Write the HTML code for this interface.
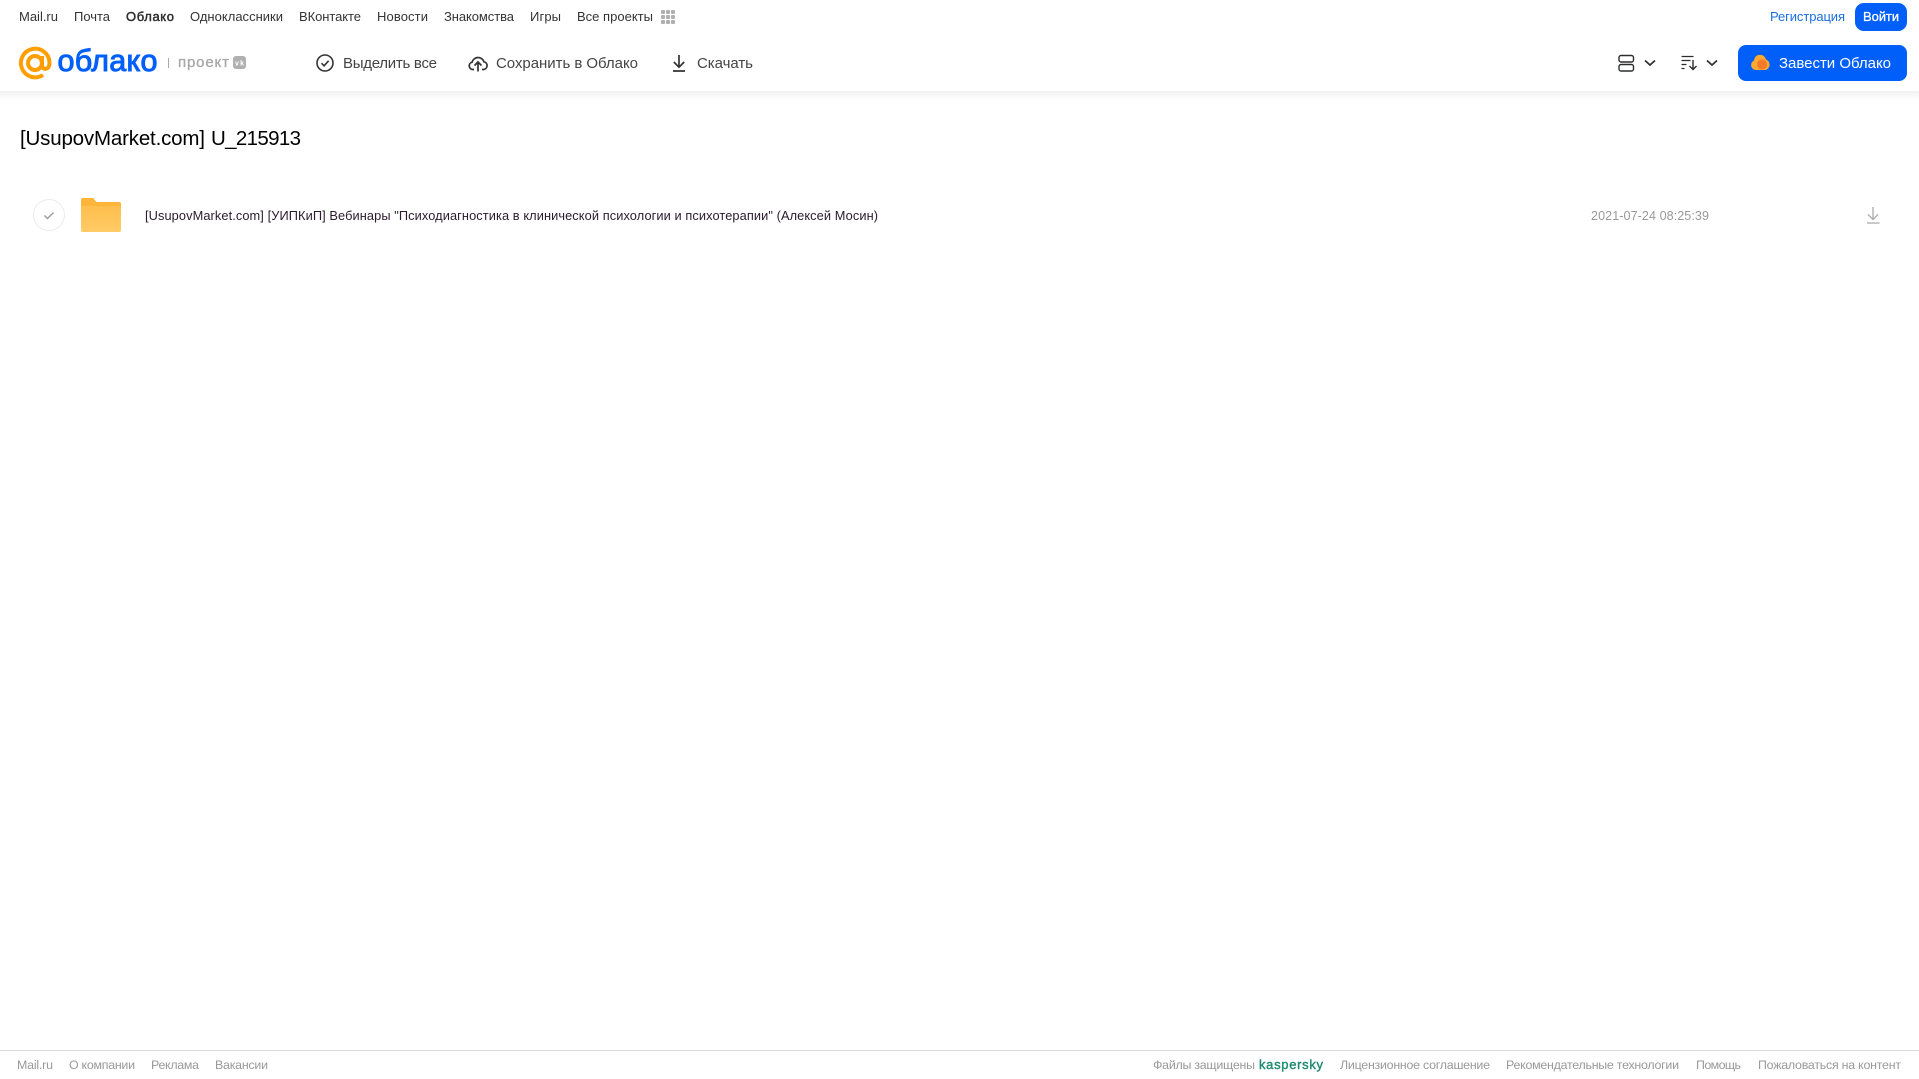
<!DOCTYPE html>
<html lang="ru">
<head>
<meta charset="utf-8">
<title>[UsupovMarket.com] U_215913</title>
<style>
html,body{margin:0;padding:0;width:1919px;height:1079px;overflow:hidden;background:#fff}
svg{display:block;position:absolute;left:0;top:0}
text{font-family:"Liberation Sans",sans-serif;white-space:pre}
.n{font-size:13px;fill:#333}
.t{font-size:15px;fill:#444}
.f{font-size:12.400px;fill:#999}
</style>
</head>
<body>
<svg width="1919" height="1079" viewBox="0 0 1919 1079" xmlns="http://www.w3.org/2000/svg">
<defs>
<linearGradient id="sh" x1="0" y1="0" x2="0" y2="1"><stop offset="0" stop-color="#f1f1f1"/><stop offset="1" stop-color="#fff"/></linearGradient>
<linearGradient id="fb" x1="0" y1="0" x2="0" y2="1"><stop offset="0" stop-color="#ffbf4d"/><stop offset="1" stop-color="#ffcb66"/></linearGradient>
</defs>
<rect x="0" y="91" width="1919" height="9" fill="url(#sh)"/>

<!-- top nav -->
<text class="n" x="19" y="21" textLength="39">Mail.ru</text>
<text class="n" x="74" y="21" textLength="36">Почта</text>
<text class="n" x="126" y="21" textLength="48" style="fill:#2c2d2e;stroke:#2c2d2e;stroke-width:.45px">Облако</text>
<text class="n" x="190" y="21" textLength="93">Одноклассники</text>
<text class="n" x="299" y="21" textLength="62">ВКонтакте</text>
<text class="n" x="377" y="21" textLength="51">Новости</text>
<text class="n" x="444" y="21" textLength="70">Знакомства</text>
<text class="n" x="530" y="21" textLength="31">Игры</text>
<text class="n" x="577" y="21" textLength="76">Все проекты</text>
<g fill="#b0b0b0">
<rect x="661" y="10" width="4" height="4" rx="1"/><rect x="666" y="10" width="4" height="4" rx="1"/><rect x="671" y="10" width="4" height="4" rx="1"/>
<rect x="661" y="15" width="4" height="4" rx="1"/><rect x="666" y="15" width="4" height="4" rx="1"/><rect x="671" y="15" width="4" height="4" rx="1"/>
<rect x="661" y="20" width="4" height="4" rx="1"/><rect x="666" y="20" width="4" height="4" rx="1"/><rect x="671" y="20" width="4" height="4" rx="1"/>
</g>
<text x="1770" y="21" textLength="75" style="font-size:13px;fill:#1a6fe0">Регистрация</text>
<rect x="1855" y="3" width="52" height="28" rx="9" fill="#005ff9"/>
<text x="1863" y="21" textLength="36" style="font-size:13px;fill:#fff;stroke:#fff;stroke-width:.3px">Войти</text>

<!-- logo -->
<g fill="none" stroke="#ff9e00" stroke-width="4">
<circle cx="35" cy="63" r="7"/>
<path d="M42 56v9c0 5.500 7.500 5.500 7.500-2A14.300 14.300 0 1 0 43 75"/>
</g>
<text x="57.500" y="71" textLength="100" style="font-size:30.500px;fill:#005ff9;stroke:#005ff9;stroke-width:1px">облако</text>
<rect x="168" y="58" width="1" height="10" fill="#aaa"/>
<text x="178" y="67" textLength="51" style="font-size:15px;fill:#a8a8a8;stroke:#a8a8a8;stroke-width:.35px">проект</text>
<rect x="233" y="56" width="13" height="13" rx="3" fill="#b0b0b0"/>
<text x="235" y="65.500" textLength="9" font-weight="700" style="font-size:7px;fill:#fff">vk</text>

<!-- toolbar -->
<circle cx="325" cy="63" r="8" fill="none" stroke="#333" stroke-width="1.600"/>
<path d="M321.500 63.200l2.600 2.600 4.500-5" fill="none" stroke="#333" stroke-width="1.600"/>
<text class="t" x="343" y="68" textLength="94">Выделить все</text>
<path d="M474 69.500h-1a3.700 3.700 0 0 1-.9-7.300 6.200 6.200 0 0 1 11.900-.4 3.900 3.900 0 0 1-.6 7.700H482" fill="none" stroke="#333" stroke-width="1.700"/>
<path d="M478 71.500v-9M474.500 65.500l3.500-3.500 3.500 3.500" fill="none" stroke="#333" stroke-width="1.700"/>
<text class="t" x="496" y="68" textLength="142">Сохранить в Облако</text>
<path d="M679 55v12M673.800 62l5.200 5.200 5.200-5.200M673 71h12" fill="none" stroke="#333" stroke-width="1.700"/>
<text class="t" x="697" y="68" textLength="56">Скачать</text>

<!-- right controls -->
<g fill="none" stroke="#2c2d2e" stroke-width="1.400">
<rect x="1619" y="55.500" width="14.500" height="6.500" rx="2"/>
<rect x="1619" y="64.500" width="14.500" height="6.500" rx="2"/>
</g>
<g fill="none" stroke="#2c2d2e" stroke-width="1.700">
<path d="M1645 60.500l5 4.500 5-4.500"/>
<path d="M1707 60.500l5 4.500 5-4.500"/>
</g>
<g fill="none" stroke="#2c2d2e" stroke-width="1.200">
<path d="M1681.500 56.500h12M1681.500 60.500h9M1681.500 64.500h5M1681.500 68.500h3"/>
<path d="M1693 60v9M1689.500 66l3.500 3.500 3.500-3.500" stroke-width="1.400"/>
</g>
<rect x="1738" y="45" width="169" height="36" rx="8" fill="#005ff9"/>
<path d="M1755.500 70a5 5 0 0 1-1.500-9.500 6 6 0 0 1 9-5 7 7 0 0 1 3 4 5.500 5.500 0 0 1-.5 10.500z" fill="#ffa930"/>
<circle cx="1762" cy="64.500" r="5" fill="#f5792a"/>
<text x="1779" y="68" textLength="112" style="font-size:15px;fill:#fff">Завести Облако</text>

<!-- title -->
<text x="20" y="145" textLength="185" style="font-size:20.500px;fill:#000">[UsupovMarket.com]</text>
<text x="211" y="145" textLength="90" style="font-size:20.500px;fill:#000">U_215913</text>

<!-- row -->
<circle cx="49" cy="215" r="15.500" fill="#fff" stroke="#ececec" stroke-width="1"/>
<path d="M44.500 215.500l3 3 6-6" fill="none" stroke="#999" stroke-width="1.400"/>
<path d="M81 200a2 2 0 0 1 2-2h9.500c2 0 2.500 4 5 4H119a2 2 0 0 1 2 2v4H81z" fill="#ffb53a"/>
<path d="M81 206h40v24a2 2 0 0 1-2 2H83a2 2 0 0 1-2-2z" fill="url(#fb)"/>
<text x="145" y="220" textLength="733" style="font-size:12.800px;fill:#2a1a2e">[UsupovMarket.com] [УИПКиП] Вебинары "Психодиагностика в клинической психологии и психотерапии" (Алексей Мосин)</text>
<text x="1591" y="220" textLength="118" style="font-size:12.600px;fill:#999">2021-07-24 08:25:39</text>
<path d="M1873 207v12M1868 214.500l5 5 5-5M1867 223h12.500" fill="none" stroke="#aaa" stroke-width="1.300"/>

<!-- footer -->
<rect x="0" y="1050" width="1919" height="1" fill="#d9d9d9"/>
<text class="f" x="17" y="1069" textLength="36">Mail.ru</text>
<text class="f" x="69" y="1069" textLength="66">О компании</text>
<text class="f" x="151" y="1069" textLength="48">Реклама</text>
<text class="f" x="215" y="1069" textLength="53">Вакансии</text>
<text class="f" x="1153" y="1069" textLength="102">Файлы защищены</text>
<text x="1259" y="1069" textLength="64" style="font-size:13px;fill:#1d8a70;stroke:#1d8a70;stroke-width:.4px">kaspersky</text>
<text class="f" x="1340" y="1069" textLength="150">Лицензионное соглашение</text>
<text class="f" x="1506" y="1069" textLength="173">Рекомендательные технологии</text>
<text class="f" x="1696" y="1069" textLength="45">Помощь</text>
<text class="f" x="1758" y="1069" textLength="143">Пожаловаться на контент</text>
</svg>
</body>
</html>
